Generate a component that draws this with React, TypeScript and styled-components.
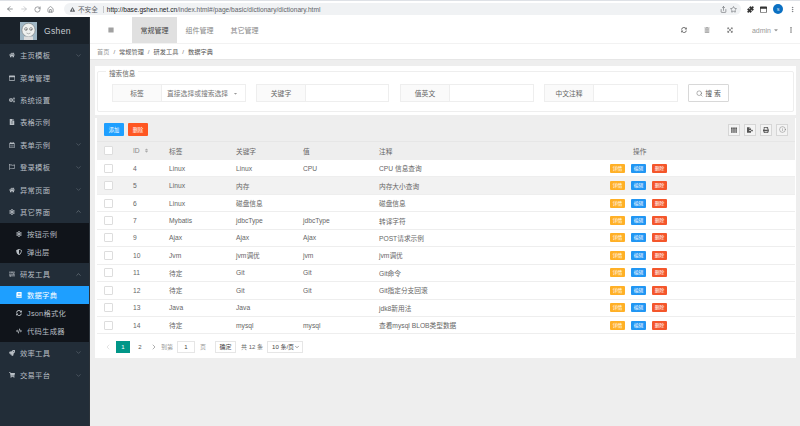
import React from "react";
import styled, { createGlobalStyle } from "styled-components";
import { ArrowLeft, ArrowRight, RotateCw, Home as HomeIcon, Share, Star, Puzzle, MoreVertical, ChevronDown, ChevronUp, ChevronLeft, ChevronRight, Search, Info } from "lucide-react";
import { FaHome, FaRegWindowMaximize, FaCogs, FaFileAlt, FaRegCalendarAlt, FaRegFlag, FaSnowflake, FaShieldAlt, FaSlidersH, FaBook, FaSyncAlt, FaCode, FaRocket, FaShoppingCart, FaExclamationTriangle, FaTrashAlt, FaExpandArrowsAlt, FaEllipsisV, FaCaretDown, FaBars, FaTh, FaPrint, FaFileExport, FaSort } from "react-icons/fa";

const Global = createGlobalStyle`
  html, body { margin: 0; padding: 0; width: 800px; height: 426px; overflow: hidden; background: #eee; }
  body, input, button, select { font-family: "Liberation Sans", "Noto Sans CJK SC", sans-serif; }
  * { box-sizing: border-box; }
`;

const Page = styled.div`display: flex; flex-direction: column; width: 800px; height: 426px;`;
const BrowserBar = styled.div`
  height: 17px; flex: none; background: #fff; display: flex; align-items: center; padding: 0 4px 0 6px; gap: 6px; color: #5f6368;
  border-top: 1px solid #dee1e6;
`;
const AddressBar = styled.div`
  margin-left: 4px; flex: 1; height: 12px; border-radius: 6px; background: #f0f2f4; display: flex; align-items: center; padding: 0 4px 0 6px; gap: 3px;
  font-size: 6.6px; color: #5f6368; white-space: nowrap; min-width: 0;
  b { color: #202124; font-weight: 400; }
`;
const Url = styled.span`flex: 1; margin-left: 2px; padding-left: 3px; border-left: 1px solid #c4c7cb; line-height: 7px;`;
const Avatar = styled.span`width: 10px; height: 10px; border-radius: 50%; background: #0b70c2; color: #fff; font-size: 4px; display: flex; align-items: center; justify-content: center;`;

const Body = styled.div`flex: 1; display: flex; min-height: 0;`;
const Sidebar = styled.aside`width: 90px; flex: none; background: #222d38; display: flex; flex-direction: column; border-right: 1px solid #2c333a; color: #b8bec4; font-size: 7.3px;`;
const Brand = styled.div`height: 27px; background: #1a222a; display: flex; align-items: center; gap: 7px; padding-left: 20px; color: #c9ced3; font-size: 8.6px; letter-spacing: .3px;`;
const MenuList = styled.div`padding-top: 0;`;
const MenuItem = styled.div<{ $active?: boolean; $sub?: boolean }>`
  height: ${p => (p.$sub ? "18px" : "22.4px")};
  display: flex; align-items: center; gap: 5px;
  padding-left: ${p => (p.$sub ? "16px" : "9px")};
  padding-right: 7px;
  background: ${p => (p.$active ? "#1e9fff" : "transparent")};
  color: ${p => (p.$active ? "#fff" : "#b8bec4")};
  letter-spacing: .25px;
  svg:first-child { width: 6px; height: 6px; flex: none; }
  span { flex: 1; white-space: nowrap; }
`;
const SubMenu = styled.div<{ $top?: number }>`background: #10141a; padding: ${p => p.$top ?? 2}px 0 2px;`;

const Main = styled.main`flex: 1; display: flex; flex-direction: column; min-width: 0; background: #eee;`;
const Header = styled.header`height: 27px; flex: none; background: #fff; border-bottom: 1px solid #f2f2f2; display: flex; align-items: stretch; font-size: 7px; color: #888;`;
const MenuToggle = styled.div`width: 42px; display: flex; align-items: center; justify-content: center; color: #444;`;
const Tab = styled.div<{ $active?: boolean }>`
  width: 45px; display: flex; align-items: center; justify-content: center;
  background: ${p => (p.$active ? "#e0e0e0" : "transparent")}; color: ${p => (p.$active ? "#444" : "#888")};
`;
const HeaderRight = styled.div`margin-left: auto; display: flex; align-items: center; padding-right: 6px; color: #777;`;
const HeaderIcon = styled.span`display: flex; width: 23px; justify-content: center; &:nth-child(2){ color: #aaa; }`;
const User = styled.span`display: flex; align-items: center; gap: 2px; margin-left: 10px; margin-right: 9px; color: #999;`;
const Crumbs = styled.nav`height: 16px; flex: none; background: #fff; border-bottom: 1px solid #e6e6e6; padding-left: 7px; display: flex; align-items: center; gap: 4px; font-size: 6.2px; color: #555; i { font-style: normal; color: #777; } em { font-style: normal; color: #999; }`;
const Content = styled.div`padding: 6px 4px 0 5px;`;

const SearchPanel = styled.section`background: #fff; height: 49px; padding: 5px 2px 2px 2px;`;
const Fieldset = styled.div`position: relative; height: 41px; border: 1px solid #eee; border-radius: 2px; display: flex; align-items: center; padding: 3px 0 0 14px;`;
const Legend = styled.span`position: absolute; top: -4px; left: 8px; padding: 0 3px; background: #fff; font-size: 6.6px; color: #666;`;
const Field = styled.div<{ $gap?: number; $w: number }>`display: flex; width: ${p => p.$w}px; height: 18px; margin-right: ${p => p.$gap ?? 0}px; border: 1px solid #eee; font-size: 6.8px; color: #666;`;
const FieldLabel = styled.label<{ $w?: number }>`width: ${p => p.$w ?? 49}px; flex: none; background: #fafafa; border-right: 1px solid #eee; display: flex; align-items: center; justify-content: center;`;
const FieldValue = styled.div`flex: 1; display: flex; align-items: center; justify-content: space-between; padding: 0 7px 0 5px; color: #777; white-space: nowrap;`;
const SearchButton = styled.button`width: 41px; height: 18px; border: 1px solid #d8d8d8; background: #fff; border-radius: 1px; display: flex; align-items: center; justify-content: center; gap: 2px; font-size: 6.8px; color: #555; padding: 0; margin-left: 10px;`;

const Card = styled.section`background: #fff; margin-top: 3px; padding: 0 1px 0 2px; height: 240px;`;
const Toolbar = styled.div`height: 24px; background: #eeeeee; display: flex; align-items: center; padding: 0 7px 0 7px; gap: 4px; border-bottom: 1px solid #e6e6e6;`;
const Action = styled.button<{ $color: string }>`width: 20px; height: 13px; border: 0; border-radius: 1px; padding: 0; background: ${p => p.$color}; color: #fff; font-size: 5.2px;`;
const ToolIcons = styled.div`margin-left: auto; display: flex; gap: 4px;`;
const ToolIcon = styled.span`width: 12px; height: 12px; border: 1px solid #d6d6d6; display: flex; align-items: center; justify-content: center; color: #555; background: #f4f4f4;`;
const Row = styled.div<{ $kind?: "head" | "alt" }>`
  display: grid; grid-template-columns: 29px 36px 67px 67px 76px 231px 1fr; align-items: center; padding-left: 7px;
  height: ${p => (p.$kind === "head" ? "18px" : "17.45px")};
  background: ${p => (p.$kind === "head" ? "#eeeeee" : p.$kind === "alt" ? "#f2f2f2" : "#fff")};
  border-bottom: 1px solid #eee; font-size: 6.7px; color: #666; white-space: nowrap;
`;
const Check = styled.span`display: block; width: 9px; height: 9px; border: 1px solid #ddd; background: #fff; border-radius: 1px;`;
const IdHead = styled.span`display: flex; align-items: center; gap: 4px; color: #888;`;
const Ops = styled.div`display: flex; gap: 6px; padding-left: 0;`;
const Op = styled.button<{ $color: string }>`width: 15px; height: 9px; border: 0; border-radius: 1px; padding: 0; background: ${p => p.$color}; color: #fff; font-size: 4.8px; line-height: 9px;`;
const Pager = styled.div`display: flex; align-items: center; height: 23px; padding: 2px 0 0 7px; font-size: 6px; color: #666;`;
const PageArrow = styled.span<{ $w: number; $dim?: boolean }>`display: flex; width: ${p => p.$w}px; color: ${p => (p.$dim ? "#bbb" : "#555")};`;
const PageNum = styled.span<{ $on?: boolean }>`width: 14px; height: 12px; display: flex; align-items: center; justify-content: center; background: ${p => (p.$on ? "#009688" : "transparent")}; color: ${p => (p.$on ? "#fff" : "#555")}; margin-right: 3px;`;
const Muted = styled.span`color: #999; margin: 0 4px 0 0;`;
const PageInput = styled.span`width: 18px; height: 12px; border: 1px solid #e6e6e6; display: flex; align-items: center; justify-content: center; margin-right: 5px; color: #444;`;
const Confirm = styled.span`width: 21px; height: 12px; border: 1px solid #e6e6e6; display: flex; align-items: center; justify-content: center; margin: 0 5px; color: #444;`;
const PageSize = styled.span`width: 36px; height: 12px; border: 1px solid #e6e6e6; display: flex; align-items: center; justify-content: space-between; padding: 0 2px 0 4px; margin-left: 4px; color: #444;`;

const LogoFrame = styled.svg`width: 17px; height: 18px; flex: none;`;

const top = [
  [FaHome, "主页模板", "d"], [FaRegWindowMaximize, "菜单管理"], [FaCogs, "系统设置"], [FaFileAlt, "表格示例"],
  [FaRegCalendarAlt, "表单示例", "d"], [FaRegFlag, "登录模板", "d"], [FaHome, "异常页面", "d"], [FaSnowflake, "其它界面", "u"],
] as const;

const rows = [
  ["4", "Linux", "Linux", "CPU", "CPU 信息查询"],
  ["5", "Linux", "内存", "", "内存大小查询"],
  ["6", "Linux", "磁盘信息", "", "磁盘信息"],
  ["7", "Mybatis", "jdbcType", "jdbcType", "转译字符"],
  ["9", "Ajax", "Ajax", "Ajax", "POST请求示例"],
  ["10", "Jvm", "jvm调优", "jvm", "jvm调优"],
  ["11", "待定", "Git", "Git", "Git命令"],
  ["12", "待定", "Git", "Git", "Git指定分支回滚"],
  ["13", "Java", "Java", "", "jdk8新用法"],
  ["14", "待定", "mysql", "mysql", "查看mysql BLOB类型数据"],
];

const Caret = ({ dir }: { dir?: string }) =>
  dir === "d" ? <ChevronDown size={7} strokeWidth={1.5} color="#7a838c" /> : dir === "u" ? <ChevronUp size={7} strokeWidth={1.5} color="#9aa2aa" /> : null;

export default function App() {
  return (
    <Page>
      <Global />
      <BrowserBar>
        <ArrowLeft size={8} />
        <ArrowRight size={8} color="#b5b8bc" />
        <RotateCw size={7} />
        <HomeIcon size={7} />
        <AddressBar>
          <FaExclamationTriangle size={5} />
          <span>不安全</span>
          <Url><b>http://base.gshen.net.cn</b>/index.html#/page/basic/dictionary/dictionary.html</Url>
          <Share size={7} />
          <Star size={7} />
        </AddressBar>
        <Puzzle size={7} color="#333" fill="#333" />
        <FaRegWindowMaximize size={7} color="#333" />
        <Avatar>S</Avatar>
        <MoreVertical size={7} />
      </BrowserBar>
      <Body>
        <Sidebar>
          <Brand>
            <LogoFrame viewBox="0 0 17 18">
              <rect width="17" height="18" fill="#9fb6c4" />
              <ellipse cx="8.5" cy="8" rx="6.6" ry="6.8" fill="#eef0ee" stroke="#666" strokeWidth=".5" />
              <circle cx="6" cy="7" r="1.4" fill="#fff" stroke="#444" strokeWidth=".5" />
              <circle cx="11" cy="7" r="1.4" fill="#fff" stroke="#444" strokeWidth=".5" />
              <circle cx="6.2" cy="7.2" r=".5" fill="#333" />
              <circle cx="11.2" cy="7.2" r=".5" fill="#333" />
              <path d="M6.5 11 Q8.5 12.6 10.5 11" stroke="#777" strokeWidth=".5" fill="none" />
              <rect x="4" y="14.5" width="9" height="3.5" fill="#ddd" />
            </LogoFrame>
            Gshen
          </Brand>
          <MenuList>
            {top.map(([Icon, label, dir]) => (
              <MenuItem key={label}><Icon /><span>{label}</span><Caret dir={dir} /></MenuItem>
            ))}
            <SubMenu>
              <MenuItem $sub><FaSnowflake /><span>按钮示例</span></MenuItem>
              <MenuItem $sub><FaShieldAlt /><span>弹出层</span></MenuItem>
            </SubMenu>
            <MenuItem><FaSlidersH /><span>研发工具</span><Caret dir="u" /></MenuItem>
            <SubMenu $top={0}>
              <MenuItem $sub $active><FaBook /><span>数据字典</span></MenuItem>
              <MenuItem $sub><FaSyncAlt /><span>Json格式化</span></MenuItem>
              <MenuItem $sub><FaCode /><span>代码生成器</span></MenuItem>
            </SubMenu>
            <MenuItem><FaRocket /><span>效率工具</span><Caret dir="d" /></MenuItem>
            <MenuItem><FaShoppingCart /><span>交易平台</span><Caret dir="d" /></MenuItem>
          </MenuList>
        </Sidebar>
        <Main>
          <Header>
            <MenuToggle><FaBars size={6} /></MenuToggle>
            <Tab $active>常规管理</Tab>
            <Tab>组件管理</Tab>
            <Tab>其它管理</Tab>
            <HeaderRight>
              <HeaderIcon><FaSyncAlt size={6} /></HeaderIcon>
              <HeaderIcon><FaTrashAlt size={6} /></HeaderIcon>
              <HeaderIcon><FaExpandArrowsAlt size={6} /></HeaderIcon>
              <User>admin <FaCaretDown size={6} /></User>
              <FaEllipsisV size={6} />
            </HeaderRight>
          </Header>
          <Crumbs><em>首页</em><i>/</i><span>常规管理</span><i>/</i><span>研发工具</span><i>/</i><span>数据字典</span></Crumbs>
          <Content>
            <SearchPanel>
              <Fieldset>
                <Legend>搜索信息</Legend>
                <Field $w={134} $gap={10}>
                  <FieldLabel>标签</FieldLabel>
                  <FieldValue>直接选择或搜索选择<FaCaretDown size={5} color="#999" /></FieldValue>
                </Field>
                <Field $w={133} $gap={11}>
                  <FieldLabel>关键字</FieldLabel>
                  <FieldValue />
                </Field>
                <Field $w={134} $gap={10}>
                  <FieldLabel>值英文</FieldLabel>
                  <FieldValue />
                </Field>
                <Field $w={134}>
                  <FieldLabel>中文注释</FieldLabel>
                  <FieldValue />
                </Field>
                <SearchButton><Search size={7} strokeWidth={1.5} />搜 索</SearchButton>
              </Fieldset>
            </SearchPanel>
            <Card>
              <Toolbar>
                <Action $color="#1e9fff">添加</Action>
                <Action $color="#ff5722">删除</Action>
                <ToolIcons>
                  <ToolIcon><FaTh size={6} /></ToolIcon>
                  <ToolIcon><FaFileExport size={6} /></ToolIcon>
                  <ToolIcon><FaPrint size={6} /></ToolIcon>
                  <ToolIcon><Info size={7} strokeWidth={1.2} /></ToolIcon>
                </ToolIcons>
              </Toolbar>
              <Row $kind="head">
                <Check />
                <IdHead>ID <FaSort size={5} color="#aaa" /></IdHead>
                <span>标签</span><span>关键字</span><span>值</span><span>注释</span>
                <Ops><span style={{ marginLeft: 23 }}>操作</span></Ops>
              </Row>
              {rows.map((r, i) => (
                <Row key={r[0]} $kind={i === 1 ? "alt" : undefined}>
                  <Check />
                  {r.map((c, j) => <span key={j}>{c}</span>)}
                  <Ops>
                    <Op $color="#ffb026">详情</Op>
                    <Op $color="#2196f3">编辑</Op>
                    <Op $color="#f4562b">删除</Op>
                  </Ops>
                </Row>
              ))}
              <Pager>
                <PageArrow $w={12} $dim><ChevronLeft size={8} strokeWidth={1.2} /></PageArrow>
                <PageNum $on>1</PageNum>
                <PageNum>2</PageNum>
                <PageArrow $w={11}><ChevronRight size={8} strokeWidth={1.4} /></PageArrow>
                <Muted>到第</Muted>
                <PageInput>1</PageInput>
                <Muted>页</Muted>
                <Confirm>确定</Confirm>
                <span>共 12 条</span>
                <PageSize>10 条/页<ChevronDown size={6} /></PageSize>
              </Pager>
            </Card>
          </Content>
        </Main>
      </Body>
    </Page>
  );
}
